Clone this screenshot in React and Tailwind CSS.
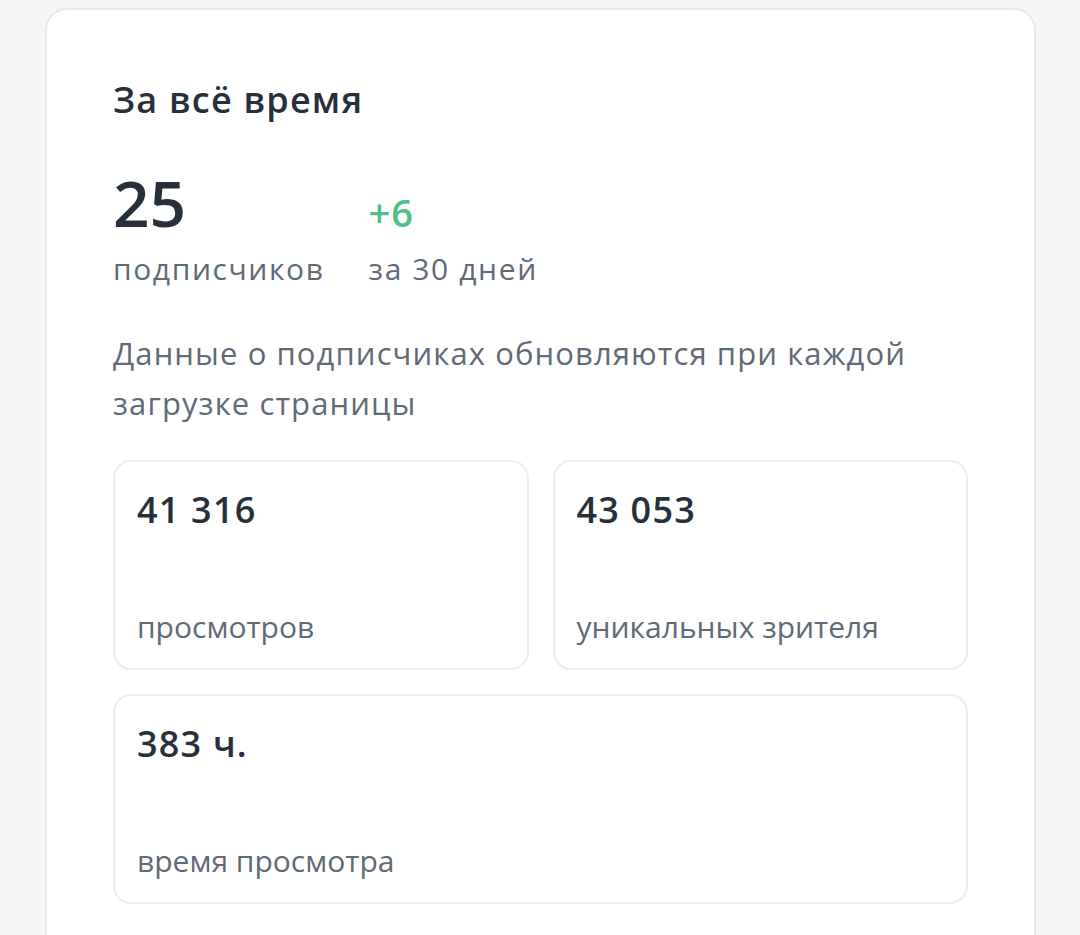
import React from "react";

const stats = [
  { value: "41 316", label: "просмотров" },
  { value: "43 053", label: "уникальных зрителя" },
];

function StatCard({ value, label, wide }) {
  return (
    <div
      className={`h-[210px] rounded-[18px] border-2 border-[#ebedef] bg-white px-[22px] pt-[26px] pb-[21px] flex flex-col justify-between ${
        wide ? "col-span-2" : ""
      }`}
    >
      <div className="text-[36px] leading-[44px] font-semibold tracking-[1.2px] text-[#27303a]">{value}</div>
      <div className="text-[30px] leading-[40px] text-[#5f6a76]">{label}</div>
    </div>
  );
}

export default function App() {
  return (
    <div
      className="h-[935px] overflow-hidden bg-[#f4f5f6] pl-[45px] pr-[44px] pt-2"
      style={{ fontFamily: '"Open Sans", "Noto Sans", sans-serif' }}
    >
      <div className="min-h-[1000px] rounded-t-[22px] border-2 border-[#e6e8eb] bg-white px-[66px] pt-[70px]">
        {/* Header */}
        <h2 className="text-[36px] leading-[40px] font-semibold tracking-[1.2px] text-[#27303a]">За всё время</h2>

        {/* Subscribers */}
        <div className="mt-[51px] grid w-fit grid-cols-[auto_auto] items-baseline gap-x-[44px]">
          <div className="text-[64px] leading-[64px] font-semibold text-[#27303a]">25</div>
          <div className="text-[38px] leading-[44px] font-semibold tracking-[1px] text-[#4fbe87]">+6</div>
          <div className="mt-[16px] text-[30px] leading-[36px] tracking-[1.6px] text-[#5f6a76]">подписчиков</div>
          <div className="mt-[16px] text-[30px] leading-[36px] tracking-[1.6px] text-[#5f6a76]">за 30 дней</div>
        </div>

        <p className="mt-[41px] text-[31px] leading-[50px] tracking-[1.1px] text-[#5f6a76]">
          Данные о подписчиках обновляются при каждой загрузке страницы
        </p>

        {/* Stat cards */}
        <div className="mt-[32px] grid grid-cols-2 gap-6">
          {stats.map((s) => (
            <StatCard key={s.label} value={s.value} label={s.label} />
          ))}
          <StatCard value="383 ч." label="время просмотра" wide />
        </div>
      </div>
    </div>
  );
}
